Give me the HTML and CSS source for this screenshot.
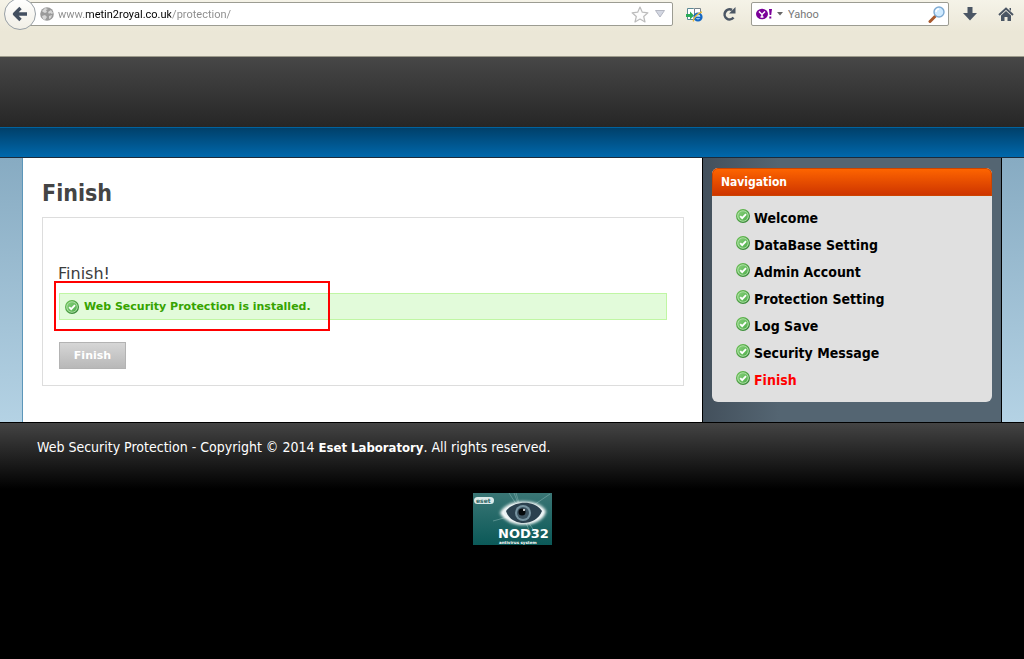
FILE: index.html
```html
<!DOCTYPE html>
<html lang="en">

<head>
    <meta charset="UTF-8">
    <title>Web Security Protection</title>
    <link rel="stylesheet" href="styles.css">
</head>

<body>
    <svg width="0" height="0" class="defs">
        <defs>
            <linearGradient id="green" x1="0" y1="0" x2="1" y2="1">
                <stop offset="0" stop-color="#86cf7a" />
                <stop offset="1" stop-color="#4fae4a" />
            </linearGradient>
            <linearGradient id="rim" x1="0" y1="0" x2="1" y2="1">
                <stop offset="0" stop-color="#6cc455" />
                <stop offset="1" stop-color="#2f7d33" />
            </linearGradient>
            <symbol id="tick" viewBox="0 0 14 14">
                <circle cx="7" cy="7" r="6.4" fill="#b4e3ac" stroke="url(#rim)" stroke-width="1.2" />
                <circle cx="7" cy="7" r="4.8" fill="url(#green)" />
                <path d="M4.2 7.2l2 2 3.8-4" fill="none" stroke="#fff" stroke-width="1.9" />
            </symbol>
        </defs>
    </svg>

    <div class="toolbar">
        <button class="back" aria-label="Back">
            <svg width="16" height="16" viewBox="0 0 16 16"><path d="M8.500 2L2.500 8l6 6M3 8h12" fill="none" stroke="#434f60" stroke-width="3.400" stroke-linejoin="round" /></svg>
        </button>
        <div class="address">
            <svg width="14" height="14" viewBox="0 0 14 14">
                <circle cx="7" cy="7" r="6.800" fill="#9a9a9a" />
                <path d="M2 4l3-3 3 1-2 1 1 2-2 1-2-1zM8 5l3-2 2 3-1 1-2-1-1 1zM2 9l3-1 2 2-2 3-2-1zM9 9l3-1-1 3-2 1z" fill="#d6d6d6" />
            </svg>
            <input class="url" type="text" aria-label="Address" value="www.metin2royal.co.uk/protection/">
            <button class="plain" aria-label="Bookmark">
                <svg width="18" height="17" viewBox="0 0 18 17"><path d="M9 1l2.300 5.200 5.600.6-4.200 3.700 1.300 5.500L9 13.100 4 16l1.300-5.500L1.100 6.800l5.600-.6z" fill="#fdfdfd" stroke="#bcbcbc" stroke-width="1.200" stroke-linejoin="round" /></svg>
            </button>
            <button class="plain" aria-label="History">
                <svg width="10" height="8" viewBox="0 0 10 8"><path d="M.5.5h9L5 7z" fill="#d3d7e2" stroke="#b4b7c2" /></svg>
            </button>
        </div>
        <button class="plain import" aria-label="Open in another browser">
            <svg width="17" height="15" viewBox="0 0 17 15">
                <path d="M1.500 1.500h6l2 2v9h-8z" fill="#fff" stroke="#5b8894" />
                <path d="M8.500 1.500h6v9h-6z" fill="#fff" stroke="#75818a" />
                <path d="M0 7h4V4.500L8 8.500l-4 4V10H0z" fill="#29ab58" />
                <circle cx="12" cy="10" r="3.500" fill="#bfe3ff" stroke="#1668c4" stroke-width="2.200" />
                <path d="M10 10.500h5" stroke="#1668c4" stroke-width="1.500" />
                <path d="M7.500 14.500c-1-3 5-9 8.500-9.500" fill="none" stroke="#e7b93a" stroke-width="1.300" />
            </svg>
        </button>
        <button class="plain reload" aria-label="Reload">
            <svg width="14" height="14" viewBox="0 0 14 14">
                <path d="M11.500 10.500A5 5 0 1 1 10 3" fill="none" stroke="#4b5664" stroke-width="2.600" />
                <path d="M13.500 0v6.500H7z" fill="#4b5664" />
            </svg>
        </button>
        <div class="search">
            <svg width="17" height="12" viewBox="0 0 17 12">
                <ellipse cx="6" cy="6" rx="6" ry="5.200" fill="#7b0099" />
                <path d="M3 3.500l3 3 3-3M6 6v3M4.500 9h3" fill="none" stroke="#fff" stroke-width="1.500" />
                <path d="M13 1h3l-.8 6h-1.600zM13.300 8.500h2v2h-2z" fill="#7b0099" />
            </svg>
            <svg width="6" height="4" viewBox="0 0 6 4"><path d="M0 0h6L3 3.500z" fill="#666" /></svg>
            <input type="text" aria-label="Search" placeholder="Yahoo">
            <button class="plain" aria-label="Go">
                <svg width="18" height="17" viewBox="0 0 18 17">
                    <path d="M2 15.500l5-5" stroke="#a8592d" stroke-width="3" stroke-linecap="round" />
                    <circle cx="11" cy="6" r="5" fill="#cfeaff" stroke="#7eaad2" stroke-width="1.400" />
                    <path d="M8 6a3 3 0 0 1 3-3" fill="none" stroke="#fff" stroke-width="1.500" />
                </svg>
            </button>
        </div>
        <button class="plain down" aria-label="Downloads">
            <svg width="14" height="14" viewBox="0 0 14 14"><path d="M4.500 0h5v6H14l-7 7.500L0 6h4.500z" fill="#4b5664" /></svg>
        </button>
        <button class="plain home" aria-label="Home">
            <svg width="16" height="14" viewBox="0 0 16 14">
                <path d="M1 8l7-6.500L15 8" fill="none" stroke="#4b5664" stroke-width="2" />
                <path d="M3 8.500l5-4.500 5 4.500V14H9.500v-4h-3v4H3zM11.500 1H13v3l-1.500-1.500z" fill="#4b5664" />
            </svg>
        </button>
    </div>

    <div class="header"></div>
    <div class="menu"></div>

    <div class="page">
        <div class="wrapper">
            <div class="content">
                <h1>Finish</h1>
                <form class="box">
                    <h2>Finish!</h2>
                    <p class="success">
                        <svg width="14" height="14"><use href="#tick" /></svg>
                        <span>Web Security Protection is installed.</span>
                        <span class="mark"></span>
                    </p>
                    <button class="submit" type="button">Finish</button>
                </form>
            </div>
            <div class="sidebar">
                <div class="block">
                    <h3>Navigation</h3>
                    <ul>
                        <li><svg width="14" height="14"><use href="#tick" /></svg>Welcome</li>
                        <li><svg width="14" height="14"><use href="#tick" /></svg>DataBase Setting</li>
                        <li><svg width="14" height="14"><use href="#tick" /></svg>Admin Account</li>
                        <li><svg width="14" height="14"><use href="#tick" /></svg>Protection Setting</li>
                        <li><svg width="14" height="14"><use href="#tick" /></svg>Log Save</li>
                        <li><svg width="14" height="14"><use href="#tick" /></svg>Security Message</li>
                        <li class="current"><svg width="14" height="14"><use href="#tick" /></svg>Finish</li>
                    </ul>
                </div>
            </div>
        </div>
    </div>

    <div class="footer">
        <p>Web Security Protection - Copyright © 2014 <b>Eset Laboratory</b>. All rights reserved.</p>
        <svg class="logo" width="79" height="52" viewBox="0 0 79 52">
            <defs>
                <linearGradient id="teal" x1="0" y1="0" x2="0" y2="1">
                    <stop offset="0" stop-color="#3a7675" />
                    <stop offset="1" stop-color="#0b5958" />
                </linearGradient>
                <filter id="glow" x="-20%" y="-30%" width="140%" height="160%"><feGaussianBlur stdDeviation="1.500" /></filter>
            </defs>
            <rect width="79" height="52" fill="url(#teal)" />
            <path d="M49 20L36 0M49 20L41 0M49 20L43 0M49 20L20 28M49 20l15 22M49 20l9 22M49 20L77 1" stroke="#8fbab8" stroke-width=".5" />
            <path d="M27 20C33 6 64 4 73 18c-3 17-37 19-46 2z" fill="#fff" filter="url(#glow)" />
            <path d="M30 19c8-12 33-12 41 0-8 14-34 14-41 0z" fill="#e9f3f5" />
            <path d="M33 18c7-10 28-12 36 0-6 16-31 16-36 0z" fill="#2b414f" />
            <circle cx="50" cy="20" r="8" fill="#7693a0" />
            <circle cx="50" cy="20" r="6" fill="#3c5360" />
            <circle cx="49" cy="19" r="3.500" fill="#05090c" />
            <circle cx="51" cy="17" r="1" fill="#fff" />
            <rect x="1" y="4" width="20" height="7" rx="3.500" fill="#dcebea" />
            <text x="3" y="10" class="logo-brand">eset</text>
            <text x="25" y="45" class="logo-name">NOD32</text>
            <text x="26" y="51" class="logo-sub">antivirus system</text>
        </svg>
    </div>
</body>

</html>
```
FILE: styles.css
```css
* {
    margin: 0;
    padding: 0;
    box-sizing: border-box;
}

body {
    background: #000;
    font-family: "DejaVu Sans", Verdana, sans-serif;
    font-size: 13px;
    color: #3c3c3c;
}

ul {
    list-style: none;
}

svg {
    display: block;
    flex: none;
}

.defs {
    position: absolute;
}

/* browser bar */
.toolbar {
    display: flex;
    align-items: flex-start;
    height: 57px;
    padding: 2px 10px 0 4px;
    background: linear-gradient(#f5f3e8, #ebe7d7 32px);
    border-bottom: 1px solid #9d9b8b;
}

.toolbar input {
    flex: 1;
    min-width: 0;
    height: 20px;
    border: 0;
    outline: 0;
    font-family: Roboto, Tahoma, sans-serif;
    font-size: 11px;
}

.back {
    display: flex;
    align-items: center;
    justify-content: center;
    width: 32px;
    height: 32px;
    margin: -4px -16px 0 0;
    position: relative;
    z-index: 1;
    background: linear-gradient(#fff, #f1efe6);
    border: 1px solid #98a0a6;
    border-radius: 50%;
}

.address,
.search {
    display: flex;
    align-items: center;
    height: 24px;
    background: #fff;
    border: 1px solid #9c9c92;
    border-radius: 2px;
}

.address {
    flex: 1;
    gap: 4px;
    padding: 0 5px 0 19px;
}

.toolbar .url {
    color: transparent;
    background: linear-gradient(90deg, #8a8a8a 28px, #000 28px, #000 113px, #8a8a8a 113px);
    -webkit-background-clip: text;
    background-clip: text;
}

.plain {
    display: flex;
    align-items: center;
    justify-content: center;
    min-width: 14px;
    height: 24px;
    background: none;
    border: 0;
}

.import {
    margin-left: 13px;
}

.reload {
    margin: 0 15px 0 19px;
}

.search {
    width: 198px;
    gap: 4px;
    padding: 0 2px 0 4px;
}

.search input {
    padding-left: 1px;
}

.search input::placeholder {
    color: #777;
}

.down {
    margin: 0 21px 0 14px;
}

/* site header */
.header {
    height: 70px;
    background: linear-gradient(#474747, #262626);
}

.menu {
    height: 31px;
    background: linear-gradient(#00406a, #0068ac);
    border-top: 1px solid #00639f;
    border-bottom: 1px solid #1c2b3b;
}

.page {
    background: linear-gradient(#87abc2, #b4d2e4);
}

.wrapper {
    display: flex;
    max-width: 980px;
    margin: 0 auto;
    background: #fff;
    border-left: 1px solid #5c96b9;
}

.content {
    flex: 1;
    padding: 19px 18px 36px 19px;
}

.content h1 {
    margin-bottom: 8px;
    font-family: "DejaVu Sans Condensed", Tahoma, sans-serif;
    font-size: 23px;
    line-height: 32px;
    color: #444;
}

.box {
    padding: 44px 16px 16px;
    border: 1px solid #ddd;
}

.box h2 {
    font-size: 16px;
    font-weight: normal;
    line-height: 24px;
    margin: 0 0 7px -1px;
}

.success {
    position: relative;
    display: flex;
    align-items: center;
    gap: 5px;
    height: 27px;
    margin-bottom: 22px;
    padding-left: 5px;
    font-size: 11px;
    font-weight: bold;
    color: #36a300;
    background: #e2fbda;
    border: 1px solid #c0f6a4;
}

/* red frame over the message */
.mark {
    position: absolute;
    top: -13px;
    left: -6px;
    width: 276px;
    height: 50px;
    border: 2px solid #f00;
}

.submit {
    width: 67px;
    height: 27px;
    font-family: inherit;
    font-size: 11px;
    font-weight: bold;
    color: #fff;
    background: linear-gradient(#d6d6d6, #b8b8b8);
    border: 1px solid #b3b3b3;
}

.sidebar {
    width: 300px;
    padding: 10px 9px 20px;
    background: linear-gradient(90deg, #43505c, #546572 76px);
    border: solid #000;
    border-width: 0 1px;
}

.block {
    background: #e0e0e0;
    border-radius: 6px;
    overflow: hidden;
}

.block h3 {
    height: 28px;
    padding-left: 9px;
    font-family: "DejaVu Sans Condensed", Tahoma, sans-serif;
    font-size: 12px;
    line-height: 28px;
    color: #fff;
    background: linear-gradient(#ff6600, #cc3300);
    border-radius: 6px 6px 0 0;
    box-shadow: inset 0 0 0 1px #cc4400;
}

.block ul {
    padding: 9px 24px 8px;
}

.block li {
    display: flex;
    gap: 4px;
    font-family: "DejaVu Sans Condensed", Verdana, sans-serif;
    font-size: 14px;
    font-weight: bold;
    line-height: 27px;
    color: #000;
}

.block li svg {
    margin-top: 4px;
}

.block .current {
    color: #f00;
}

.footer {
    padding: 15px 37px;
    color: #fff;
    background: linear-gradient(#444, #000 66px);
    border-top: 1px solid #000;
}

.footer p {
    font-family: "DejaVu Sans Condensed", Verdana, sans-serif;
    font-size: 14px;
    line-height: 18px;
}

.footer b {
    font-size: 13px;
}

.logo {
    margin: 36px auto 0;
}

.logo-brand {
    font: bold 6px "DejaVu Sans", sans-serif;
    fill: #2f6665;
}

.logo-name {
    font: bold 13px "DejaVu Sans", sans-serif;
    fill: #fff;
}

.logo-sub {
    font: bold 4px "DejaVu Sans", sans-serif;
    fill: #fff;
}
```
